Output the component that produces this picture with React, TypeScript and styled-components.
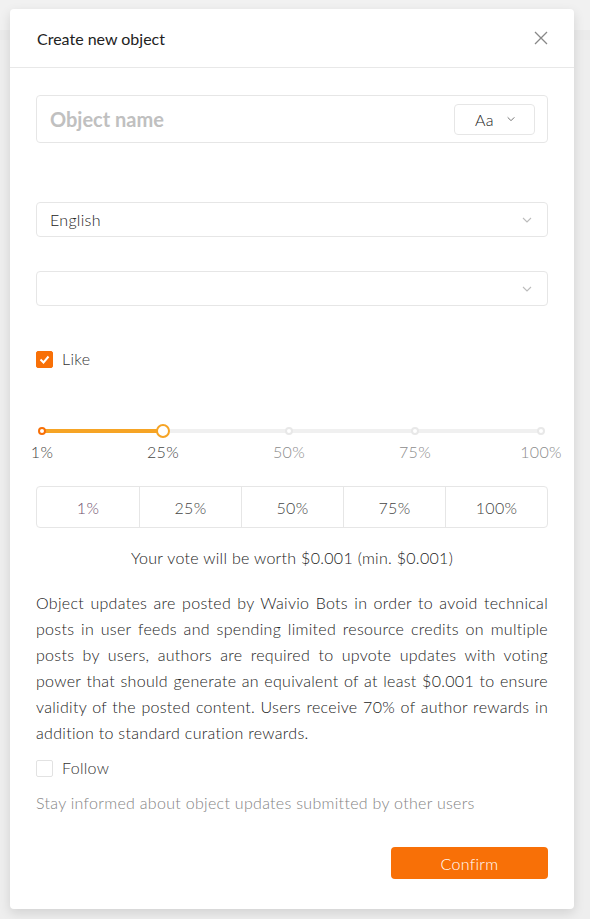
import React from 'react';
import styled, { createGlobalStyle } from 'styled-components';

const GlobalStyle = createGlobalStyle`
  html, body {
    margin: 0;
    padding: 0;
    background: #eeeeee;
  }
  body {
    font-family: Lato, "Noto Sans", "Liberation Sans", sans-serif;
    font-weight: 300;
    letter-spacing: 0.3px;
    -webkit-font-smoothing: antialiased;
  }
`;

const orange = '#f87007';
const sliderOrange = '#f6a425';

const Backdrop = styled.div`
  min-height: 919px;
  padding: 9px 16px 9px 10px;
  box-sizing: border-box;
  background: linear-gradient(#f1f1f1 0, #f1f1f1 30px, #ebebeb 30px, #ebebeb 40px, #eeeeee 40px);
`;

const Modal = styled.div`
  width: 564px;
  background: #fff;
  border-radius: 4px;
  box-shadow: 0 4px 12px rgba(0, 0, 0, 0.12);
  overflow: hidden;
`;

const Header = styled.div`
  height: 58px;
  display: flex;
  align-items: center;
  justify-content: space-between;
  padding: 0 22px 0 27px;
  border-bottom: 1px solid #e8e8e8;
`;

const Title = styled.div`
  font-size: 16px;
  font-weight: 400;
  letter-spacing: 0;
  color: #222;
`;

const CloseButton = styled.button`
  border: none;
  background: none;
  padding: 4px;
  display: flex;
  cursor: pointer;
`;

const Body = styled.div`
  padding: 27px 26px 30px 26px;
  display: flex;
  flex-direction: column;
`;

const NameBox = styled.div`
  height: 48px;
  border: 1px solid #e6e6e6;
  border-radius: 4px;
  box-sizing: border-box;
  display: flex;
  align-items: center;
  justify-content: space-between;
  padding: 0 12px 0 13px;
`;

const NamePlaceholder = styled.span`
  font-size: 20px;
  font-weight: 700;
  letter-spacing: 0;
  color: #c0c0c0;
`;

const CaseSelect = styled.div`
  width: 81px;
  height: 31px;
  box-sizing: border-box;
  border: 1px solid #e6e6e6;
  border-radius: 4px;
  display: flex;
  align-items: center;
  justify-content: center;
  gap: 12px;
  font-size: 16px;
  color: #222;
  padding-left: 2px;
`;

const Select = styled.div<{ $mt: number }>`
  margin-top: ${(p) => p.$mt}px;
  height: 35px;
  box-sizing: border-box;
  border: 1px solid #e6e6e6;
  border-radius: 4px;
  display: flex;
  align-items: center;
  justify-content: space-between;
  padding: 0 14px 0 13px;
  font-size: 16px;
  color: #222;
`;

const CheckRow = styled.label<{ $mt: number }>`
  margin-top: ${(p) => p.$mt}px;
  display: flex;
  align-items: center;
  gap: 9px;
  font-size: 16px;
  color: #333;
`;

const Box = styled.span<{ $checked?: boolean }>`
  width: 17px;
  height: 17px;
  box-sizing: border-box;
  border-radius: 2px;
  border: 1px solid ${(p) => (p.$checked ? orange : '#e2e2e2')};
  background: ${(p) => (p.$checked ? orange : '#fff')};
  display: flex;
  align-items: center;
  justify-content: center;
  margin-top: ${(p) => (p.$checked ? '3px' : '1px')};
`;

const SliderWrap = styled.div`
  margin-top: 56px;
  height: 34px;
  position: relative;
`;

const Track = styled.div`
  position: absolute;
  left: 6px;
  right: 7px;
  top: 5px;
  height: 4px;
  border-radius: 2px;
  background: #f0f0f0;
`;

const Fill = styled.div`
  position: absolute;
  left: 0;
  top: 0;
  bottom: 0;
  background: ${sliderOrange};
  border-radius: 2px;
`;

const Dot = styled.span<{ $active?: boolean; $start?: boolean }>`
  position: absolute;
  top: -2px;
  width: 8px;
  height: 8px;
  margin-left: -4px;
  box-sizing: border-box;
  border-radius: 50%;
  background: #fff;
  border: 2px solid ${(p) => (p.$start ? orange : p.$active ? sliderOrange : '#e8e8e8')};
`;

const Thumb = styled.span`
  position: absolute;
  top: -5px;
  width: 14px;
  height: 14px;
  margin-left: -7px;
  box-sizing: border-box;
  border-radius: 50%;
  background: #fff;
  border: 2px solid ${sliderOrange};
`;

const Mark = styled.span<{ $active?: boolean }>`
  position: absolute;
  top: 13px;
  transform: translateX(-50%);
  font-size: 16px;
  color: ${(p) => (p.$active ? '#444' : '#8c8c8c')};
  white-space: nowrap;
`;

const PercentGroup = styled.div`
  margin-top: 28px;
  height: 42px;
  display: grid;
  grid-template-columns: repeat(5, 1fr);
  border: 1px solid #e6e6e6;
  border-radius: 4px;
  box-sizing: border-box;
`;

const PercentButton = styled.div<{ $first?: boolean }>`
  display: flex;
  align-items: center;
  justify-content: center;
  font-size: 16px;
  color: ${(p) => (p.$first ? '#6e4f6e' : '#444')};
  border-left: ${(p) => (p.$first ? 'none' : '1px solid #e6e6e6')};
`;

const VoteWorth = styled.div`
  margin-top: 20px;
  text-align: center;
  font-size: 16px;
  color: #222;
`;

const Notice = styled.p`
  margin: 23px 0 0;
  font-size: 16px;
  line-height: 26px;
  color: #222;
  text-align: justify;
`;

const Hint = styled.div`
  margin-top: 16px;
  font-size: 16px;
  color: #848484;
`;

const Footer = styled.div`
  margin-top: 35px;
  display: flex;
  justify-content: flex-end;
`;

const ConfirmButton = styled.button`
  width: 157px;
  height: 32px;
  border: none;
  border-radius: 4px;
  background: ${orange};
  color: #fff;
  font-family: inherit;
  font-weight: 300;
  letter-spacing: 0.3px;
  font-size: 16px;
  cursor: pointer;
`;

const Chevron = ({ color = '#bcbcbc', size = 12 }: { color?: string; size?: number }) => (
  <svg width={size} height={size} viewBox="0 0 12 12" fill="none">
    <path d="M2 4l4 4 4-4" stroke={color} strokeWidth="1.1" />
  </svg>
);

const marks = [1, 25, 50, 75, 100];
const value = 25;
const pos = (v: number) => ((v - 1) / 99) * 100;

const App = () => {
  return (
    <>
      <GlobalStyle />
      <Backdrop>
        <Modal>
          <Header>
            <Title>Create new object</Title>
            <CloseButton aria-label="close">
              <svg width="14" height="14" viewBox="0 0 14 14">
                <path d="M1 1l12 12M13 1L1 13" stroke="#888" strokeWidth="1.3" />
              </svg>
            </CloseButton>
          </Header>
          <Body>
            <NameBox>
              <NamePlaceholder>Object name</NamePlaceholder>
              <CaseSelect>
                Aa
                <Chevron color="#666" size={10} />
              </CaseSelect>
            </NameBox>

            <Select $mt={59}>
              English
              <Chevron />
            </Select>
            <Select $mt={34}>
              <span />
              <Chevron />
            </Select>

            <CheckRow $mt={42}>
              <Box $checked>
                <svg width="11" height="9" viewBox="0 0 11 9">
                  <path d="M1.5 4.5l3 3 5-6" stroke="#fff" strokeWidth="2" fill="none" />
                </svg>
              </Box>
              Like
            </CheckRow>

            <SliderWrap>
              <Track>
                <Fill style={{ width: `${pos(value)}%` }} />
                {marks.map((m) =>
                  m === value ? (
                    <Thumb key={m} style={{ left: `${pos(m)}%` }} />
                  ) : (
                    <Dot key={m} $start={m === 1} $active={m < value} style={{ left: `${pos(m)}%` }} />
                  )
                )}
                {marks.map((m) => (
                  <Mark key={`l${m}`} $active={m <= value} style={{ left: `${pos(m)}%` }}>
                    {m}%
                  </Mark>
                ))}
              </Track>
            </SliderWrap>

            <PercentGroup>
              {marks.map((m, i) => (
                <PercentButton key={m} $first={i === 0}>
                  {m}%
                </PercentButton>
              ))}
            </PercentGroup>

            <VoteWorth>Your vote will be worth $0.001 (min. $0.001)</VoteWorth>

            <Notice>
              Object updates are posted by Waivio Bots in order to avoid technical posts in user feeds and
              spending limited resource credits on multiple posts by users, authors are required to upvote
              updates with voting power that should generate an equivalent of at least $0.001 to ensure
              validity of the posted content. Users receive 70% of author rewards in addition to standard
              curation rewards.
            </Notice>

            <CheckRow $mt={12}>
              <Box />
              Follow
            </CheckRow>
            <Hint>Stay informed about object updates submitted by other users</Hint>

            <Footer>
              <ConfirmButton>Confirm</ConfirmButton>
            </Footer>
          </Body>
        </Modal>
      </Backdrop>
    </>
  );
};

export default App;
